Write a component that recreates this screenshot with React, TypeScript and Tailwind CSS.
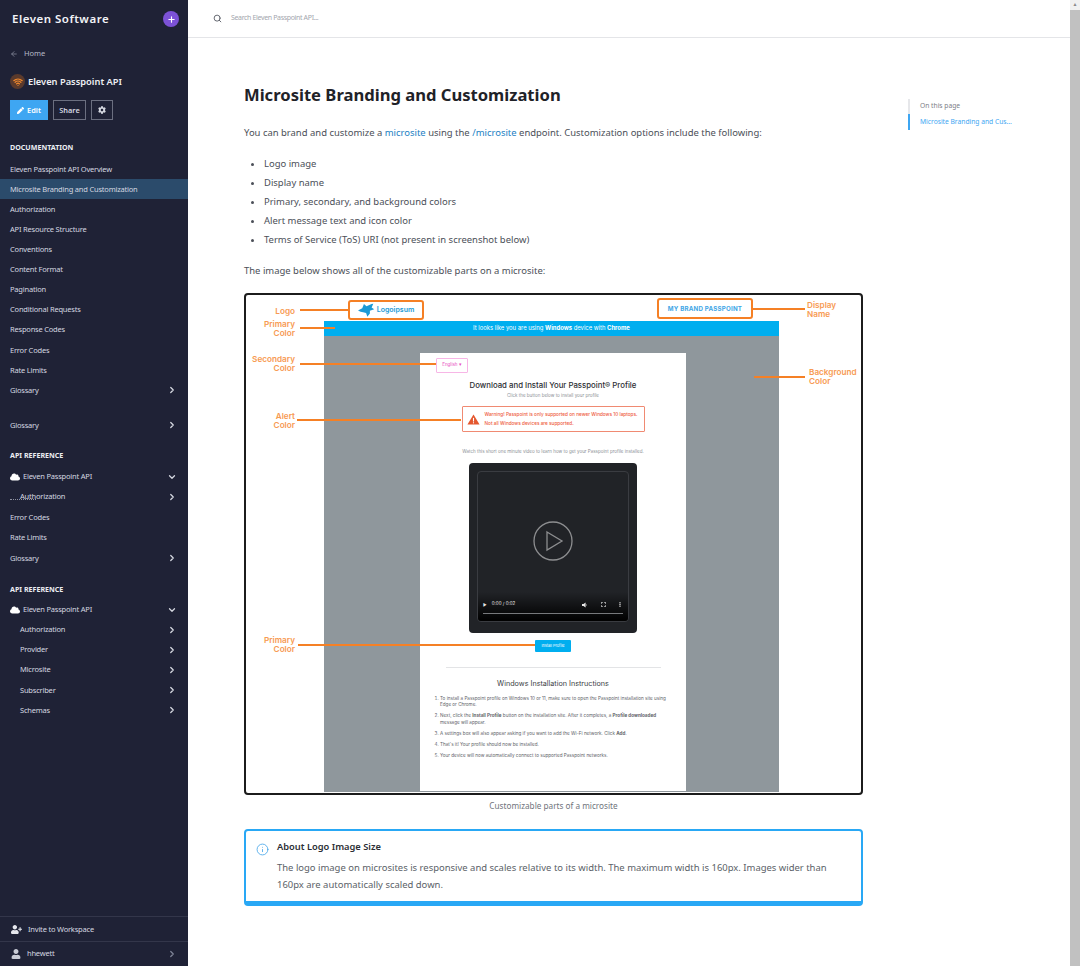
import { ArrowLeft, ChevronDown, ChevronRight, Info, Plus, Search, Wifi } from 'lucide-react'
import { FaCloud, FaCog, FaPen, FaUser, FaUserPlus } from 'react-icons/fa'

// ─── Sidebar data ─────────────────────────────────────────────────────────────

const DOCS = [
  { label: 'Eleven Passpoint API Overview' },
  { label: 'Microsite Branding and Customization', active: true },
  { label: 'Authorization' },
  { label: 'API Resource Structure' },
  { label: 'Conventions' },
  { label: 'Content Format' },
  { label: 'Pagination' },
  { label: 'Conditional Requests' },
  { label: 'Response Codes' },
  { label: 'Error Codes' },
  { label: 'Rate Limits' },
  { label: 'Glossary', arrow: true },
]

const API_ITEMS = ['Authorization', 'Provider', 'Microsite', 'Subscriber', 'Schemas']

const BULLETS = [
  'Logo image',
  'Display name',
  'Primary, secondary, and background colors',
  'Alert message text and icon color',
  'Terms of Service (ToS) URI (not present in screenshot below)',
]

const STEPS = [
  <>To install a Passpoint profile on Windows 10 or 11, make sure to open the Passpoint installation site using Edge or Chrome.</>,
  <>Next, click the <b>Install Profile</b> button on the installation site. After it completes, a <b>Profile downloaded</b> message will appear.</>,
  <>A settings box will also appear asking if you want to add the Wi-Fi network. Click <b>Add</b>.</>,
  <>That's it! Your profile should now be installed.</>,
  <>Your device will now automatically connect to supported Passpoint networks.</>,
]

// callout lines and labels sit on the picture as a free canvas, offsets from its inner corner
const LINES = [
  'left-[54px] top-[14px] w-[48px]',
  'left-[54px] top-[32px] w-[35px]',
  'left-[54px] top-[68px] w-[136px]',
  'left-[51px] top-[124px] w-[164px]',
  'left-[52px] top-[349px] w-[237px]',
  'left-[506px] top-[13px] w-[53px]',
  'left-[508px] top-[81px] w-[51px]',
]

const LABELS = [
  { cls: 'right-[566px] top-[12px] text-right', text: ['Logo'] },
  { cls: 'right-[566px] top-[25px] text-right', text: ['Primary', 'Color'] },
  { cls: 'right-[566px] top-[60px] text-right', text: ['Secondary', 'Color'] },
  { cls: 'right-[566px] top-[117px] text-right', text: ['Alert', 'Color'] },
  { cls: 'right-[566px] top-[341px] text-right', text: ['Primary', 'Color'] },
  { cls: 'left-[561px] top-[6px]', text: ['Display', 'Name'] },
  { cls: 'left-[563px] top-[73px]', text: ['Background', 'Color'] },
]

function NavRow({ label, active, arrow, indent, tall }: { label: string; active?: boolean; arrow?: boolean; indent?: boolean; tall?: boolean }) {
  return (
    <div className={`flex items-center justify-between pr-[11px] text-[7.5px] tracking-[-0.2px] text-[#d5d8e0] ${tall ? 'h-[20.5px]' : 'h-[20.1px]'} ${indent ? 'pl-[20px]' : 'pl-[10px]'} ${active ? 'bg-[#2b4b6b]' : ''}`}>
      <span>{label}</span>
      {arrow && <ChevronRight size={10} strokeWidth={3} className="text-[#d5d8e0]" />}
    </div>
  )
}

function SectionLabel({ children }: { children: string }) {
  return <p className="pl-[10px] text-[7.1px] font-bold leading-[10px] text-[#eceef3]">{children}</p>
}

function ApiRow() {
  return (
    <div className="flex h-[20.2px] items-center justify-between pl-[10px] pr-[11px] text-[7.5px] tracking-[-0.2px] text-[#d5d8e0]">
      <span className="flex items-center gap-[3px]">
        <FaCloud size={10} className="text-white" />
        Eleven Passpoint API
      </span>
      <ChevronDown size={10} strokeWidth={3} />
    </div>
  )
}

function Sidebar() {
  return (
    <aside className="flex h-[966px] w-[188px] shrink-0 flex-col bg-[#1f2236]">
      <div className="flex h-[38px] items-center justify-between pl-[12px] pr-[9px]">
        <span className="text-[11.5px] font-semibold tracking-[0.5px] text-[#f2f3f6]">Eleven Software</span>
        <span className="flex h-[16px] w-[16px] items-center justify-center rounded-full bg-[#7c52d6]">
          <Plus size={9} strokeWidth={3} className="text-white" />
        </span>
      </div>
      <div className="mt-[10px] flex items-center gap-[6px] pl-[10px] text-[7.5px] text-[#b6bac6]">
        <ArrowLeft size={8} strokeWidth={2.5} className="text-[#7f8496]" />
        Home
      </div>
      <div className="mt-[15px] flex items-center gap-[3px] pl-[10px]">
        <span className="flex h-[15px] w-[15px] items-center justify-center rounded-full bg-[#5a3a2c]">
          <Wifi size={10} strokeWidth={3} className="text-[#f28a2e]" />
        </span>
        <span className="text-[9.3px] font-semibold text-[#eef0f4]">Eleven Passpoint API</span>
      </div>
      <div className="mt-[11px] flex gap-[5px] pl-[10px]">
        <span className="flex h-[20px] w-[38px] items-center justify-center gap-[3px] bg-[#3ea6f2] text-[7.4px] font-semibold text-white">
          <FaPen size={7} />
          Edit
        </span>
        <span className="flex h-[20px] w-[33px] items-center justify-center border border-[#6b6f80] text-[7.4px] font-semibold text-[#d5d8e0]">Share</span>
        <span className="flex h-[20px] w-[22px] items-center justify-center border border-[#6b6f80] text-[#d5d8e0]">
          <FaCog size={8} />
        </span>
      </div>

      <div className="mt-[22px]"><SectionLabel>DOCUMENTATION</SectionLabel></div>
      <div className="mt-[7px]">
        {DOCS.map(d => <NavRow key={d.label} {...d} />)}
      </div>
      <div className="mt-[15px]"><NavRow label="Glossary" arrow /></div>

      <div className="mt-[15px]"><SectionLabel>API REFERENCE</SectionLabel></div>
      <div className="mt-[6px]">
        <ApiRow />
        <div className="relative">
          <NavRow label="Authorization" arrow indent tall />
          <span className="absolute left-[10px] top-[12px] w-[26px] border-b border-dotted border-[#8e92a2]" />
        </div>
        <NavRow label="Error Codes" tall />
        <NavRow label="Rate Limits" tall />
        <NavRow label="Glossary" arrow tall />
      </div>

      <div className="mt-[15px]"><SectionLabel>API REFERENCE</SectionLabel></div>
      <div className="mt-[6px]">
        <ApiRow />
        {API_ITEMS.map(a => <NavRow key={a} label={a} arrow indent />)}
      </div>

      <div className="mt-auto">
        <div className="flex h-[25px] items-center gap-[6px] border-t border-[#33364a] pl-[11px] pt-[1px] text-[7.5px] tracking-[-0.2px] text-[#d5d8e0]">
          <FaUserPlus size={11} className="text-[#e6e8ee]" />
          Invite to Workspace
        </div>
        <div className="flex h-[25px] items-center justify-between border-t border-[#33364a] pl-[11px] pr-[11px] text-[7.5px] tracking-[-0.2px] text-[#d5d8e0]">
          <span className="flex items-center gap-[6px]">
            <FaUser size={10} className="text-[#c9ccd6]" />
            hhewett
          </span>
          <ChevronRight size={10} strokeWidth={3} className="text-[#7f8496]" />
        </div>
      </div>
    </aside>
  )
}

function Microsite() {
  return (
    <div className="absolute left-[78px] top-[26px] flex h-[471px] w-[455px] flex-col bg-[#8f979c]">
      <div className="flex h-[15px] shrink-0 items-center justify-center bg-[#00aeef] font-['Inter',sans-serif] text-[5.9px] text-white">
        <span>It looks like you are using <b>Windows</b> device with <b>Chrome</b></span>
      </div>
      <div className="ml-[96px] mt-[17px] flex h-[438px] w-[266px] flex-col items-center bg-white font-['Inter',sans-serif]">
        <div className="ml-[16px] mt-[5px] flex h-[15px] w-[32px] items-center justify-center self-start rounded-[1px] border border-[#f7b6e6] text-[4.5px] text-[#e84cc0]">English ▾</div>
        <p className="mt-[7px] text-[7.8px] font-medium leading-[10px] text-[#2c2e33]">Download and Install Your Passpoint® Profile</p>
        <p className="mt-[3px] text-[4.5px] leading-[6px] text-[#8b8f95]">Click the button below to install your profile</p>
        <div className="mt-[7px] flex h-[26px] w-[183px] items-center gap-[5px] rounded-[1px] border border-[#f08a72] pl-[4px] text-[4.7px] font-medium leading-[9px] text-[#ee5a3c]">
          <svg viewBox="0 0 14 12" className="h-[11px] w-[13px] shrink-0">
            <path d="M7 0.5 L13.6 11.5 H0.4 Z" fill="#e4572e" />
            <rect x="6.4" y="4.2" width="1.2" height="4" fill="#fff" />
            <rect x="6.4" y="9" width="1.2" height="1.2" fill="#fff" />
          </svg>
          <div>
            <p>Warning! Passpoint is only supported on newer Windows 10 laptops.</p>
            <p>Not all Windows devices are supported.</p>
          </div>
        </div>
        <p className="mt-[17px] text-[4.5px] leading-[6px] text-[#8b8f95]">Watch this short one minute video to learn how to get your Passpoint profile installed.</p>
        <div className="mt-[8px] h-[170px] w-[168px] shrink-0 rounded-[4px] bg-[#212327] p-[8px]">
          <div className="relative h-[151px] overflow-hidden rounded-[4px] border border-[#3a3c41]">
            <svg viewBox="0 0 40 40" className="absolute left-[55px] top-[49px] h-[40px] w-[40px]" fill="none" stroke="#8d8e90" strokeWidth="1.3">
              <circle cx="20" cy="20" r="19" />
              <path d="M14 11 L29 20 L14 29 Z" />
            </svg>
            <div className="absolute inset-x-0 bottom-0 h-[29px] bg-gradient-to-b from-transparent to-black" />
            <div className="absolute inset-x-[5px] bottom-[13px] flex items-center justify-between text-[4.5px] text-[#e8e8e8]">
              <span className="flex items-center gap-[5px]"><span className="text-[4px]">▶</span>0:00 / 0:02</span>
              <span className="flex items-center gap-[13px] pr-[2px]">
                <svg viewBox="0 0 10 10" className="h-[6px] w-[6px]" fill="#e8e8e8"><path d="M0 3.5 H2.5 L6 1 V9 L2.5 6.5 H0 Z M7 3 Q9 5 7 7 Z" /></svg>
                <svg viewBox="0 0 10 10" className="h-[5px] w-[5px]" fill="none" stroke="#e8e8e8" strokeWidth="1.6"><path d="M0.8 3.5 V0.8 H3.5 M6.5 0.8 H9.2 V3.5 M9.2 6.5 V9.2 H6.5 M3.5 9.2 H0.8 V6.5" /></svg>
                <svg viewBox="0 0 4 10" className="h-[5px] w-[2px]" fill="#e8e8e8"><circle cx="2" cy="1.5" r="1.3" /><circle cx="2" cy="5" r="1.3" /><circle cx="2" cy="8.5" r="1.3" /></svg>
              </span>
            </div>
            <div className="absolute inset-x-[5px] bottom-[7px] h-[1px] bg-[#77797c]" />
          </div>
        </div>
        <div className="mt-[7px] flex h-[12px] w-[36px] shrink-0 items-center justify-center rounded-[1px] bg-[#00aeef] text-[3.8px] text-white">Install Profile</div>
        <div className="mt-[15px] h-px w-[215px] shrink-0 bg-[#e3e4e6]" />
        <p className="mt-[11px] text-[7.2px] leading-[10px] text-[#3b3e44]">Windows Installation Instructions</p>
        <ol className="mt-[7px] w-[236px] list-decimal pl-[5px] text-[4.6px] leading-[6.4px] text-[#5e6268]">
          {STEPS.map((s, i) => <li key={i} className="mb-[4.6px]">{s}</li>)}
        </ol>
      </div>
    </div>
  )
}

function Diagram() {
  return (
    <div className="relative mt-[15px] h-[502px] w-[619px] rounded-[4px] border-2 border-[#1c1c1c] bg-white">
      <Microsite />
      <div className="absolute left-[102px] top-[5px] flex h-[20px] w-[76px] items-center justify-center gap-[2px] rounded-[3px] border-2 border-[#f58025] bg-white">
        <svg viewBox="0 0 20 16" className="h-[14px] w-[17px]" fill="#1b9ad6">
          <path d="M0 8.5 L5 6 L7 1 L10 3.5 L16 1 L18 0.5 L16 5 L19 7 L14 9 L14 12 L11 16 L9.5 11.5 L6 10.5 L3 10 Z" />
        </svg>
        <span className="font-['Inter',sans-serif] text-[7px] font-semibold text-[#1b9ad6]">Logoipsum</span>
      </div>
      <div className="absolute left-[411px] top-[3px] flex h-[21px] w-[96px] items-center justify-center rounded-[3px] border-2 border-[#f58025] bg-white font-['Inter',sans-serif] text-[6.2px] font-bold tracking-[0.2px] text-[#3ea6e6]">
        MY BRAND PASSPOINT
      </div>
      {LINES.map(l => <span key={l} className={`absolute h-[2px] bg-[#f58025] ${l}`} />)}
      {LABELS.map(l => (
        <div key={l.cls} className={`absolute font-['Inter',sans-serif] text-[8.2px] font-semibold leading-[9px] text-[#f79a52] ${l.cls}`}>
          {l.text.map(t => <p key={t}>{t}</p>)}
        </div>
      ))}
    </div>
  )
}

export default function App() {
  return (
    <div className="flex h-[966px] w-[1080px] overflow-hidden bg-white font-['Noto_Sans',sans-serif]">
      <Sidebar />
      <div className="flex min-w-0 flex-1 flex-col">
        <header className="flex h-[38px] shrink-0 items-center gap-[9px] border-b border-[#e4e5e8] pl-[25px] text-[7px] tracking-[-0.35px] text-[#a3a6ae]">
          <Search size={9} strokeWidth={2.5} className="text-[#5d606a]" />
          Search Eleven Passpoint API...
        </header>
        <main className="relative flex-1 pl-[56px]">
          <h1 className="mt-[45px] text-[16.6px] font-bold leading-[24px] text-[#1f2228]">Microsite Branding and Customization</h1>
          <p className="mt-[19px] text-[9.46px] leading-[14px] text-[#4b4f58]">
            You can brand and customize a <span className="text-[#1b7fc4]">microsite</span> using the <span className="text-[#1b7fc4]">/microsite</span> endpoint. Customization options include the following:
          </p>
          <ul className="mt-[14px] list-disc pl-[20px] text-[9.46px] leading-[19px] text-[#4b4f58]">
            {BULLETS.map(b => <li key={b}>{b}</li>)}
          </ul>
          <p className="mt-[15px] text-[9.46px] leading-[14px] text-[#4b4f58]">The image below shows all of the customizable parts on a microsite:</p>
          <Diagram />
          <p className="mt-[5px] w-[619px] text-center text-[8.2px] leading-[12px] text-[#70747c]">Customizable parts of a microsite</p>
          <div className="mt-[17px] flex h-[77px] w-[619px] gap-[8px] rounded-[4px] border-2 border-b-[5px] border-[#29a8f5] pl-[10px] pt-[9px]">
            <Info size={13} strokeWidth={1.6} className="mt-[3px] shrink-0 text-[#4aa8ea]" />
            <div>
              <p className="text-[9.3px] font-semibold leading-[14px] text-[#2b2e35]">About Logo Image Size</p>
              <p className="mt-[5px] w-[560px] text-[9.46px] leading-[17px] text-[#5b5f68]">
                The logo image on microsites is responsive and scales relative to its width. The maximum width is 160px. Images wider than 160px are automatically scaled down.
              </p>
            </div>
          </div>
          <div className="absolute left-[720px] top-[61px] border-l-2 border-[#e6e7ea] text-[6.7px]">
            <p className="flex h-[15px] items-center pl-[10px] text-[#7d8087]">On this page</p>
            <p className="-ml-[2px] flex h-[16px] items-center border-l-2 border-[#3ea6f2] pl-[10px] text-[#3ea6f2]">Microsite Branding and Cus...</p>
          </div>
        </main>
      </div>
      <div className="flex w-[10px] shrink-0 flex-col bg-[#f1f1f1]">
        <span className="flex h-[10px] items-center justify-center text-[5px] text-[#8a8a8a]">▲</span>
        <div className="h-[956px] bg-[#c1c1c1]" />
      </div>
    </div>
  )
}
